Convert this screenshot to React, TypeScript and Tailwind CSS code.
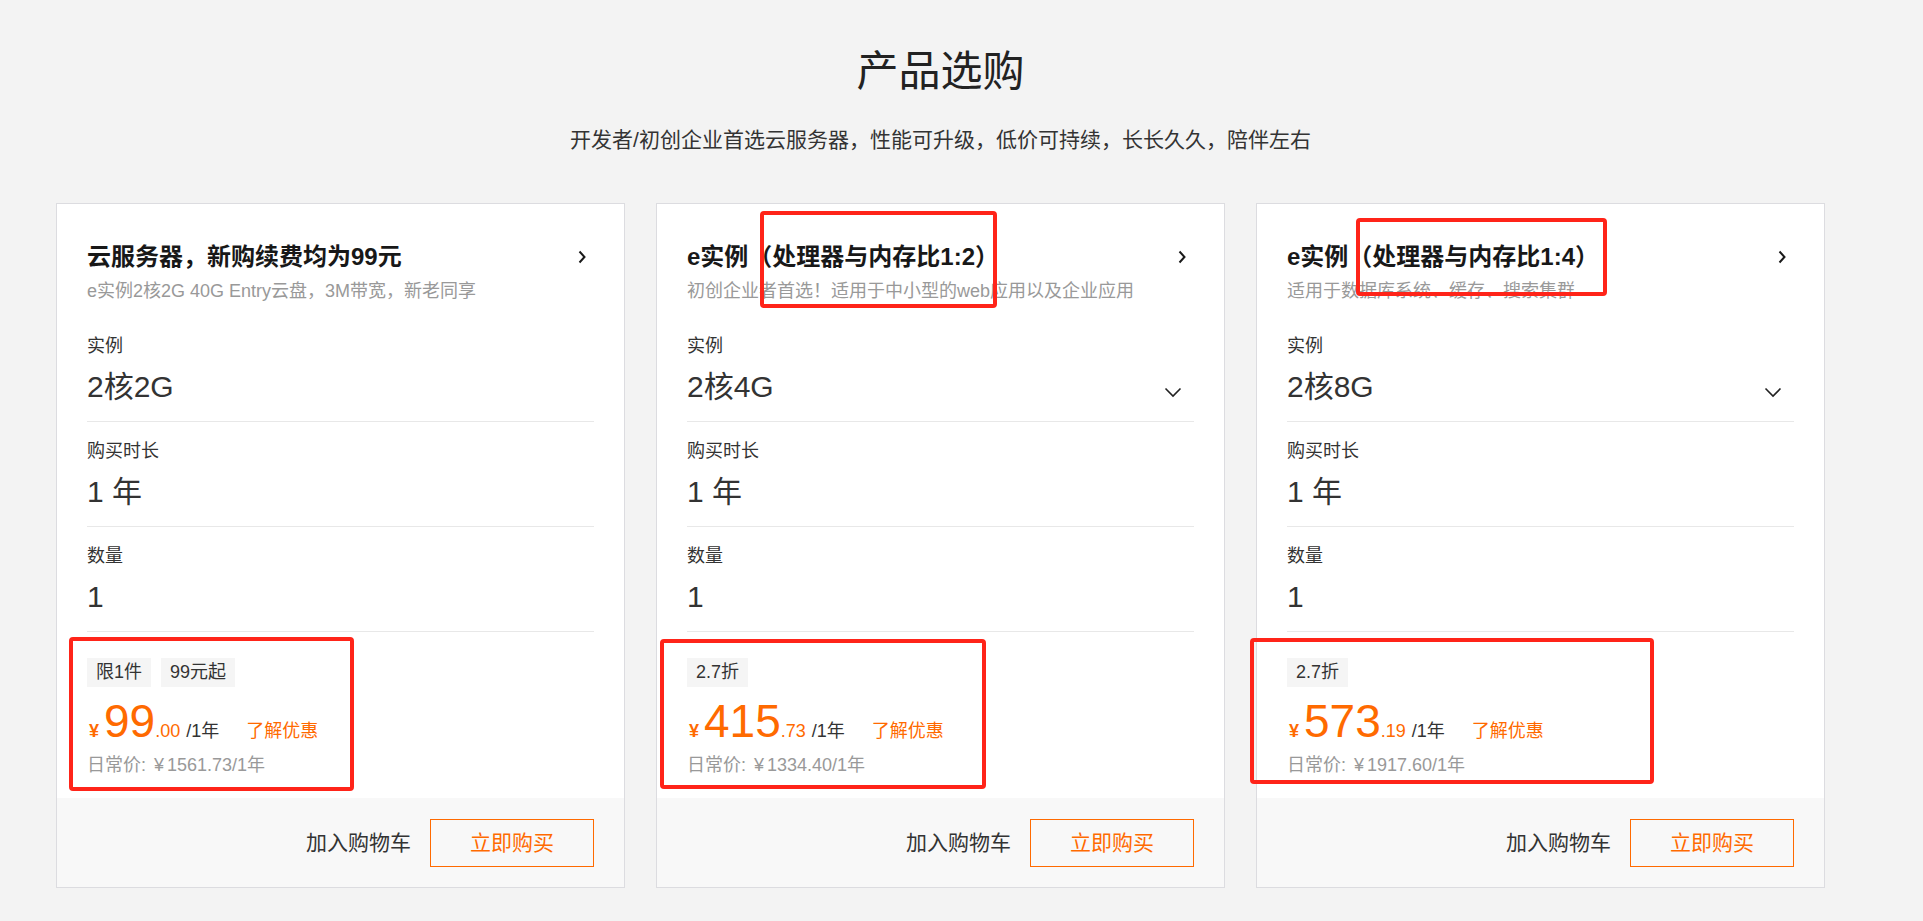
import React from 'react';

interface Product {
  id: string;
  title: string;
  desc: string;
  instance: string;
  selectable: boolean;
  tags: string[];
  price: string;
  cents: string;
  original: string;
}

const products: Product[] = [
  {
    id: 'p1',
    title: '云服务器，新购续费均为99元',
    desc: 'e实例2核2G 40G Entry云盘，3M带宽，新老同享',
    instance: '2核2G',
    selectable: false,
    tags: ['限1件', '99元起'],
    price: '99',
    cents: '.00',
    original: '1561.73/1年',
  },
  {
    id: 'p2',
    title: 'e实例（处理器与内存比1:2）',
    desc: '初创企业者首选！适用于中小型的web应用以及企业应用',
    instance: '2核4G',
    selectable: true,
    tags: ['2.7折'],
    price: '415',
    cents: '.73',
    original: '1334.40/1年',
  },
  {
    id: 'p3',
    title: 'e实例（处理器与内存比1:4）',
    desc: '适用于数据库系统、缓存、搜索集群',
    instance: '2核8G',
    selectable: true,
    tags: ['2.7折'],
    price: '573',
    cents: '.19',
    original: '1917.60/1年',
  },
];

// annotation boxes drawn over the screenshot
const marks = [
  { id: 'm1', cls: 'left-[69px] top-[637px] w-[285px] h-[154px]' },
  { id: 'm2', cls: 'left-[760px] top-[211px] w-[237px] h-[97px]' },
  { id: 'm3', cls: 'left-[660px] top-[639px] w-[326px] h-[150px]' },
  { id: 'm4', cls: 'left-[1356px] top-[218px] w-[251px] h-[78px]' },
  { id: 'm5', cls: 'left-[1250px] top-[638px] w-[404px] h-[146px]' },
];

const ChevronRight = () => (
  <svg width="10" height="14" viewBox="0 0 10 14" fill="none" className="mr-[7px] shrink-0">
    <path d="M2.5 1.5 L7.5 7 L2.5 12.5" stroke="#1a1a1a" strokeWidth="2" />
  </svg>
);

const ChevronDown = () => (
  <svg width="18" height="11" viewBox="0 0 18 11" fill="none" className="mr-[12px] mt-[10px] shrink-0">
    <path d="M1.5 1.5 L9 9 L16.5 1.5" stroke="#222" strokeWidth="1.6" />
  </svg>
);

const Row = ({ label, children }: { label: string; children: React.ReactNode }) => (
  <div className="pt-[18px] pb-[14px] border-b border-[#e8e8e8]">
    <div className="text-[18px] leading-[22px] text-[#333]">{label}</div>
    <div className="mt-[10px] h-[40px] flex items-center">{children}</div>
  </div>
);

const ProductCard = ({ p }: { p: Product }) => {
  return (
    <div className="bg-white border border-[#dcdce0] flex flex-col">
      {/* Header */}
      <div className="px-[30px] pt-[37px]">
        <div className="flex items-center justify-between h-[32px]">
          <h3 className="text-[24px] leading-[32px] font-bold text-[#181818]">{p.title}</h3>
          <ChevronRight />
        </div>
        <p className="mt-[6px] text-[18px] leading-[24px] text-[#999]">{p.desc}</p>
      </div>

      {/* Options */}
      <div className="px-[30px] mt-[14px]">
        <Row label="实例">
          <span className="flex-1 text-[30px] leading-[40px] text-[#333]">{p.instance}</span>
          {p.selectable && <ChevronDown />}
        </Row>
        <Row label="购买时长">
          <span className="text-[30px] leading-[40px] text-[#333]">1 年</span>
        </Row>
        <Row label="数量">
          <span className="text-[30px] leading-[40px] text-[#333]">1</span>
        </Row>
      </div>

      {/* Price */}
      <div className="px-[30px] pt-[26px] pb-[21px]">
        <div className="flex gap-[10px]">
          {p.tags.map((t) => (
            <span key={t} className="h-[29px] px-[9px] flex items-center bg-[#f5f5f5] text-[18px] text-[#333]">
              {t}
            </span>
          ))}
        </div>
        <div className="mt-[12px] h-[44px] flex items-baseline text-[#ff6a00]">
          <span className="text-[18px] font-bold ml-[2px] mr-[5px]">¥</span>
          <span className="text-[46px] leading-[44px]">{p.price}</span>
          <span className="text-[18px]">{p.cents}</span>
          <span className="text-[18px] text-[#333] ml-[6px]">/1年</span>
          <span className="text-[18px] ml-[27px]">了解优惠</span>
        </div>
        <div className="mt-[10px] text-[18px] leading-[24px] text-[#999]">
          日常价: <span className="mx-[3px]">¥</span>{p.original}
        </div>
      </div>

      {/* Footer */}
      <div className="h-[89px] bg-[#f8f8f8] px-[30px] flex items-center justify-end gap-[19px]">
        <span className="text-[21px] text-[#333]">加入购物车</span>
        <button className="w-[164px] h-[48px] border border-[#ff6a00] text-[#ff6a00] text-[21px]">
          立即购买
        </button>
      </div>
    </div>
  );
};

export default function App() {
  return (
    <div className="relative min-h-screen bg-[#f3f3f3] pl-[56px] pt-[44px] pb-[40px] font-['Liberation_Sans','Noto_Sans_CJK_SC',sans-serif]">
      <div className="w-[1769px]">
        <h1 className="text-center text-[42px] leading-[56px] text-[#222]">产品选购</h1>
        <p className="mt-[26px] text-center text-[21px] leading-[28px] text-[#333]">
          开发者/初创企业首选云服务器，性能可升级，低价可持续，长长久久，陪伴左右
        </p>
        <div className="mt-[49px] grid grid-cols-3 gap-[31px]">
          {products.map((p) => (
            <ProductCard key={p.id} p={p} />
          ))}
        </div>
      </div>

      {marks.map((m) => (
        <div key={m.id} className={`absolute border-4 border-[#ff2419] rounded-[4px] pointer-events-none ${m.cls}`} />
      ))}
    </div>
  );
}
